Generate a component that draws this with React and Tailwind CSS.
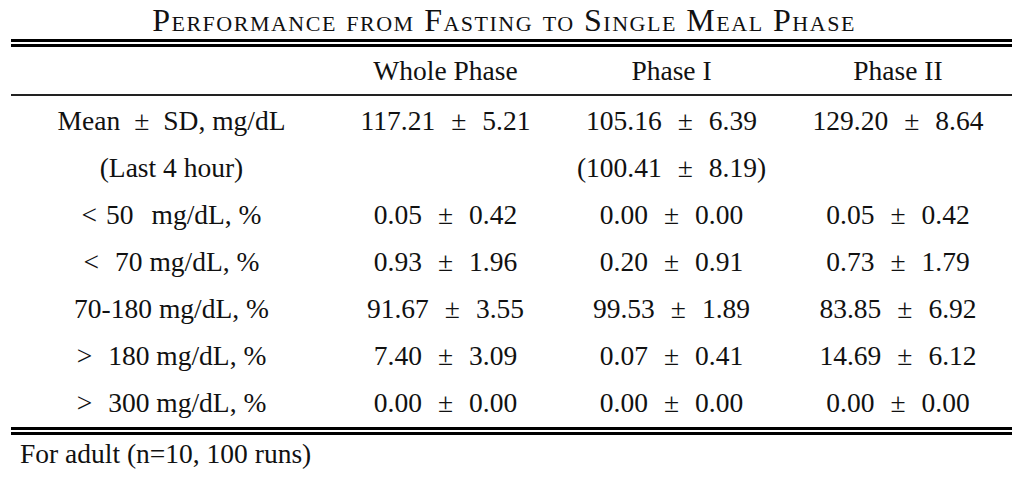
import React from 'react';

// rows of the glucose table: label + three mean ± sd cells
const rows = [
  { label: <>Mean<span className="mx-[14px]">±</span>SD, mg/dL</>, cells: [['117.21', '5.21'], ['105.16', '6.39'], ['129.20', '8.64']] },
  { label: <>(Last 4 hour)</>, cells: [null, ['100.41', '8.19', true], null] },
  { label: <><span className="mr-[9px]">&lt;</span>50<span className="ml-[18px]">mg/dL, %</span></>, cells: [['0.05', '0.42'], ['0.00', '0.00'], ['0.05', '0.42']] },
  { label: <><span className="mr-[16px]">&lt;</span>70 mg/dL, %</>, cells: [['0.93', '1.96'], ['0.20', '0.91'], ['0.73', '1.79']] },
  { label: <>70-180 mg/dL, %</>, cells: [['91.67', '3.55'], ['99.53', '1.89'], ['83.85', '6.92']] },
  { label: <><span className="mr-[16px]">&gt;</span>180 mg/dL, %</>, cells: [['7.40', '3.09'], ['0.07', '0.41'], ['14.69', '6.12']] },
  { label: <><span className="mr-[16px]">&gt;</span>300 mg/dL, %</>, cells: [['0.00', '0.00'], ['0.00', '0.00'], ['0.00', '0.00']] },
];

function Pm({ v }) {
  if (!v) return <span />;
  const [a, b, paren] = v;
  return (
    <span className="whitespace-pre">
      {paren && '('}{a}<span className="mx-[16px]">±</span>{b}{paren && ')'}
    </span>
  );
}

const cols = 'grid grid-cols-[321px_227px_225px_228px] text-center';

export default function App() {
  return (
    <div className="min-h-screen bg-white text-[#111] font-[Liberation_Serif] text-[27.5px] leading-[30px]">
      <div className="ml-[11px] w-[1001px]">
        {/* title */}
        <div className="pt-[5px] pr-[15px] text-center text-[32px] tracking-[1.5px] [font-variant-caps:small-caps]">
          Performance from Fasting to Single Meal Phase
        </div>
        <div className="mt-[4px] h-[3px] bg-black" />
        <div className="mt-[2px] h-[3px] bg-black" />

        {/* header */}
        <div className={`${cols} pt-[9px] pb-[8px]`}>
          <div />
          <div>Whole Phase</div>
          <div>Phase I</div>
          <div>Phase II</div>
        </div>
        <div className="h-[2px] bg-[#222]" />

        {/* body */}
        {rows.map((row, i) => (
          <div key={i} className={`${cols} pt-[10px] pb-[7px]`}>
            <div className="whitespace-pre">{row.label}</div>
            {row.cells.map((c, j) => (
              <div key={j}><Pm v={c} /></div>
            ))}
          </div>
        ))}

        <div className="mt-[2px] h-[3px] bg-black" />
        <div className="mt-[2px] h-[3px] bg-black" />
      </div>

      <div className="ml-[20px] mt-[4px]">For adult (n=10, 100 runs)</div>
    </div>
  );
}
